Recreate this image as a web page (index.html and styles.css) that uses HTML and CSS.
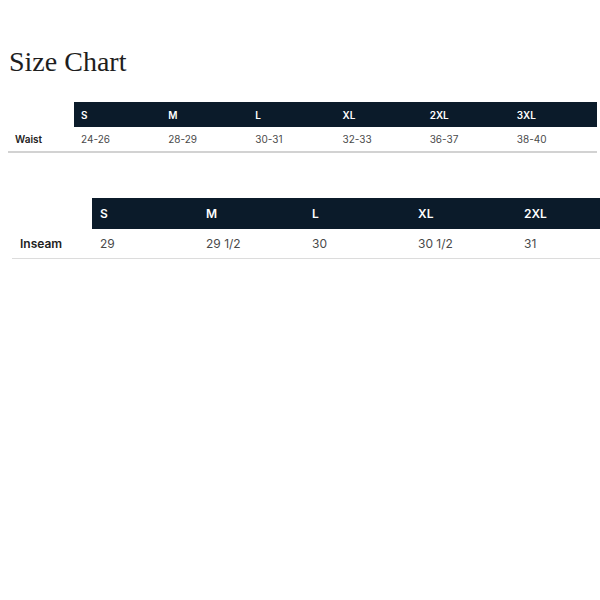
FILE: index.html
```html
<!DOCTYPE html>
<html>
<head>
<meta charset="utf-8">
<link rel="stylesheet" href="styles.css">
</head>
<body>
<h1 class="title">Size Chart</h1>

<div class="chart chart-waist">
  <div class="row head">
    <div class="blank"></div>
    <div class="hcell">S</div>
    <div class="hcell">M</div>
    <div class="hcell">L</div>
    <div class="hcell">XL</div>
    <div class="hcell">2XL</div>
    <div class="hcell">3XL</div>
  </div>
  <div class="row data">
    <div class="label">Waist</div>
    <div class="cell">24-26</div>
    <div class="cell">28-29</div>
    <div class="cell">30-31</div>
    <div class="cell">32-33</div>
    <div class="cell">36-37</div>
    <div class="cell">38-40</div>
  </div>
</div>

<div class="chart chart-inseam">
  <div class="row head">
    <div class="blank"></div>
    <div class="hcell">S</div>
    <div class="hcell">M</div>
    <div class="hcell">L</div>
    <div class="hcell">XL</div>
    <div class="hcell">2XL</div>
  </div>
  <div class="row data">
    <div class="label">Inseam</div>
    <div class="cell">29</div>
    <div class="cell">29 1/2</div>
    <div class="cell">30</div>
    <div class="cell">30 1/2</div>
    <div class="cell">31</div>
  </div>
</div>
</body>
</html>
```

FILE: styles.css
```css
html, body {
  margin: 0;
  padding: 0;
  background: #ffffff;
  overflow: hidden;
}

body {
  font-family: Inter, "Liberation Sans", Arial, sans-serif;
  color: #333;
}

.title {
  font-family: "Liberation Serif", "Times New Roman", serif;
  font-weight: 400;
  font-size: 28px;
  line-height: 32px;
  color: #1e1e1e;
  margin: 46px 0 0 9px;
}

.chart .row {
  display: grid;
}

.head .hcell {
  background: #0b1b2a;
  color: #ffffff;
  font-weight: 600;
  display: flex;
  align-items: center;
}

.data .label {
  font-weight: 600;
  color: #222;
  display: flex;
  align-items: center;
}

.data .cell {
  color: #4a4a4a;
  display: flex;
  align-items: center;
}

/* Waist chart */
.chart-waist {
  margin: 24px 3px 0 8px;
  font-size: 10px;
}
.chart-waist .row {
  grid-template-columns: 66px repeat(6, 1fr);
}
.chart-waist .head {
  height: 25px;
}
.chart-waist .hcell,
.chart-waist .cell,
.chart-waist .label {
  padding-left: 7px;
}
.chart-waist .data {
  height: 24px;
  border-bottom: 2px solid #d2d2d2;
}

/* Inseam chart */
.chart-inseam {
  margin: 45px 0 0 12px;
  font-size: 12px;
}
.chart-inseam .row {
  grid-template-columns: 80px repeat(4, 106px) 1fr;
}
.chart-inseam .head {
  height: 31px;
}
.chart-inseam .hcell,
.chart-inseam .cell,
.chart-inseam .label {
  padding-left: 8px;
}
.chart-inseam .data {
  height: 29px;
  border-bottom: 1px solid #dcdcdc;
}
```
